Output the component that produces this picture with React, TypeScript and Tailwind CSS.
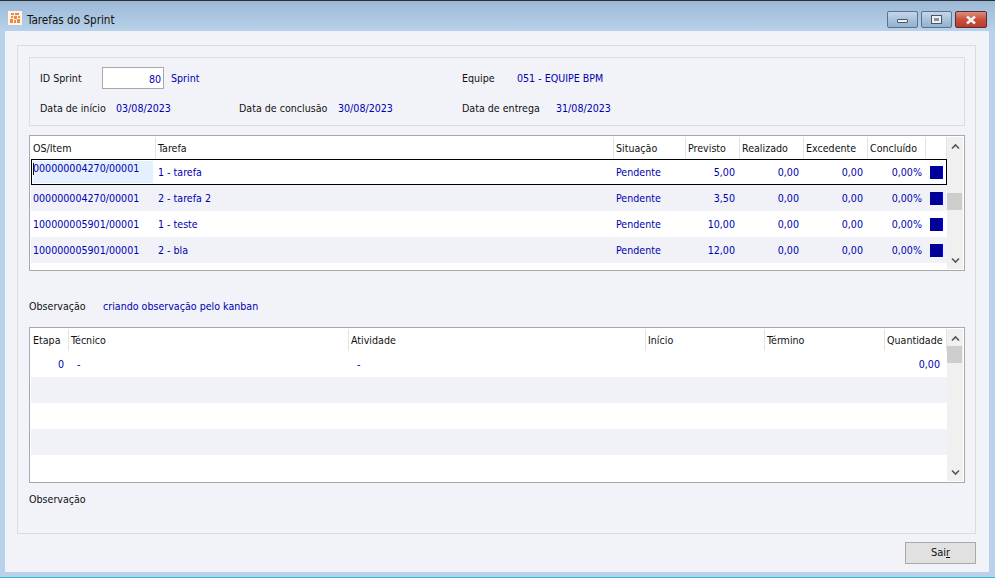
import React from "react";

const blue = "text-[#0000b0]";

const taskCols = [
  { title: "OS/Item", w: "w-[125px]" },
  { title: "Tarefa", w: "w-[458px]" },
  { title: "Situação", w: "w-[72px]" },
  { title: "Previsto", w: "w-[54px]" },
  { title: "Realizado", w: "w-[64px]" },
  { title: "Excedente", w: "w-[64px]" },
  { title: "Concluído", w: "w-[58px]" },
  { title: "", w: "w-[21px]" },
];

const tasks = [
  { os: "000000004270/00001", task: "1 - tarefa", prev: "5,00" },
  { os: "000000004270/00001", task: "2 - tarefa 2", prev: "3,50" },
  { os: "100000005901/00001", task: "1 - teste", prev: "10,00" },
  { os: "100000005901/00001", task: "2 - bla", prev: "12,00" },
];

const stepCols = [
  { title: "Etapa", w: "w-[38px]" },
  { title: "Técnico", w: "w-[280px]" },
  { title: "Atividade", w: "w-[297px]" },
  { title: "Início", w: "w-[119px]" },
  { title: "Término", w: "w-[120px]" },
  { title: "Quantidade", w: "w-[62px]" },
];

function HeaderRow({ cols }: { cols: { title: string; w: string }[] }) {
  return (
    <div className="flex h-[22px] shrink-0 bg-white">
      {cols.map((c) => (
        <div
          key={c.title || "blank"}
          className={`${c.w} h-[22px] border-r border-[#e3e3e3] pl-[2px] pt-[3px] leading-[16px] text-[#111] whitespace-nowrap`}
        >
          {c.title}
        </div>
      ))}
    </div>
  );
}

function Scrollbar({ thumb }: { thumb: string }) {
  return (
    <div className="flex w-[16px] shrink-0 flex-col bg-[#f0f0f0]">
      <div className="flex h-[18px] items-center justify-center">
        <svg width="9" height="7" viewBox="0 0 9 7">
          <path d="M1 5.5 L4.5 2 L8 5.5" fill="none" stroke="#555" strokeWidth="1.6" />
        </svg>
      </div>
      <div className={`${thumb} h-[17px] w-[15px] bg-[#cdcdcd]`} />
      <div className="flex-1" />
      <div className="flex h-[18px] items-center justify-center">
        <svg width="9" height="7" viewBox="0 0 9 7">
          <path d="M1 1.5 L4.5 5 L8 1.5" fill="none" stroke="#555" strokeWidth="1.6" />
        </svg>
      </div>
    </div>
  );
}

function TaskRow({ t, index }: { t: (typeof tasks)[number]; index: number }) {
  const selected = index === 0;
  return (
    <div
      className={`relative flex h-[26px] items-center ${blue} ${index % 2 === 1 ? "bg-[#f1f2f8]" : "bg-white"}`}
    >
      {selected && (
        <div className="absolute left-0 top-0 h-[26px] w-[916px] border border-black" />
      )}
      {selected && (
        <div className="absolute left-[2px] top-[2px] h-[22px] w-[120px] bg-[#e4f0fd]" />
      )}
      <div className={`relative w-[125px] pl-[2px] pt-[2px] whitespace-nowrap ${selected ? "-translate-y-[4px]" : ""}`}>
        {t.os}
      </div>
      {selected && <div className="absolute left-[2px] top-[4px] h-[12px] w-[1px] bg-[#111]" />}
      <div className="w-[458px] pl-[2px] pt-[2px]">{t.task}</div>
      <div className="w-[72px] pl-[2px] pt-[2px]">Pendente</div>
      <div className="w-[54px] pr-[5px] pt-[2px] text-right">{t.prev}</div>
      <div className="w-[64px] pr-[5px] pt-[2px] text-right">0,00</div>
      <div className="w-[64px] pr-[5px] pt-[2px] text-right">0,00</div>
      <div className="w-[58px] pr-[4px] pt-[2px] text-right">0,00%</div>
      <div className="w-[21px] pl-[4px]">
        <div className="h-[13px] w-[13px] border-r border-[#0000ff] bg-[#000099]" />
      </div>
    </div>
  );
}

function StepRow({ index }: { index: number }) {
  const first = index === 0;
  return (
    <div className={`flex h-[26px] items-center pt-[2px] ${blue} ${index % 2 === 1 ? "bg-[#f1f2f8]" : "bg-white"}`}>
      <div className="w-[33px] text-right">{first ? "0" : ""}</div>
      <div className="w-[285px] pl-[13px]">{first ? "-" : ""}</div>
      <div className="w-[297px] pl-[8px]">{first ? "-" : ""}</div>
      <div className="w-[119px]" />
      <div className="w-[120px]" />
      <div className="w-[55px] text-right">{first ? "0,00" : ""}</div>
    </div>
  );
}

function WindowButton({ children, close }: { children: React.ReactNode; close?: boolean }) {
  return (
    <div
      className={`flex h-[17px] items-center justify-center rounded-[2px] border ${
        close
          ? "w-[32px] border-[#5c2a3a] bg-gradient-to-b from-[#dc8c7c] via-[#c8503c] to-[#b83c2c]"
          : "w-[31px] border-[#5f7088] bg-gradient-to-b from-[#c5d8ea] via-[#a9c2da] to-[#93b2ce]"
      }`}
    >
      {children}
    </div>
  );
}

export default function App() {
  return (
    <div className="flex h-[578px] w-[995px] flex-col overflow-hidden border-t border-[#2b2f33] bg-[#b9d1ea] font-['DejaVu_Sans_Condensed','Noto_Sans',sans-serif] text-[10.6px] text-[#111]">
      <div className="flex h-[30px] shrink-0 items-center bg-gradient-to-b from-[#9bb9d6] to-[#b9d1ea] pl-[8px] pr-[8px]">
        <svg width="14" height="14" viewBox="0 0 14 14" className="mt-[4px] shrink-0">
          <rect width="14" height="14" fill="#fdf3ea" />
          <path d="M3 2 H6 V4 H3 Z M7 2 H11 V4 H7 Z M3 5 H5 V7 H3 Z M6 5 H9 V8 H6 Z M10 5 H12 V7 H10 Z M2 8 H5 V12 H2 Z M6 9 H8 V12 H6 Z M9 8 H12 V12 H9 Z" fill="#f28a3c" />
        </svg>
        <span className="ml-[5px] mt-[9px] text-[11.6px] text-[#111]">Tarefas do Sprint</span>
        <div className="ml-auto mt-[7px] flex gap-[3px]">
          <WindowButton>
            <div className="mt-[3px] h-[4px] w-[11px] rounded-[1px] border border-[#4a5568] bg-[#f0f0f0]" />
          </WindowButton>
          <WindowButton>
            <div className="flex h-[9px] w-[11px] items-center justify-center border border-[#4a5568] bg-[#f0f0f0]">
              <div className="h-[3px] w-[5px] bg-[#7f93a8]" />
            </div>
          </WindowButton>
          <WindowButton close>
            <svg width="12" height="10" viewBox="0 0 12 10">
              <path d="M2 1.5 L10 8.5 M10 1.5 L2 8.5" stroke="#f2f2f2" strokeWidth="2.6" />
            </svg>
          </WindowButton>
        </div>
      </div>

      <div className="flex flex-1 pb-[5px] pl-[5px]">
        <div className="flex h-[541px] w-[984px] flex-col bg-[#f2f3f9] pl-[12px] pr-[13px] pt-[14px]">
          <div className="flex h-[489px] w-[959px] shrink-0 flex-col border border-[#dcdcdc] px-[11px] pt-[11px]">
            <div className="flex h-[69px] w-[936px] shrink-0 flex-col border border-[#dcdcdc] pl-[10px]">
              <div className="mt-[9px] flex h-[22px] items-center">
                <span className="w-[62px] pt-[2px]">ID Sprint</span>
                <div className={`h-[22px] w-[62px] border border-[#a9a9a9] bg-white pr-[2px] text-right leading-[22px] ${blue}`}>
                  80
                </div>
                <span className={`ml-[7px] w-[291px] pt-[2px] ${blue}`}>Sprint</span>
                <span className="w-[55px] pt-[2px]">Equipe</span>
                <span className={`pt-[2px] ${blue}`}>051 - EQUIPE BPM</span>
              </div>
              <div className="mt-[12px] flex h-[16px] items-center">
                <span className="w-[76px]">Data de início</span>
                <span className={`w-[123px] ${blue}`}>03/08/2023</span>
                <span className="w-[99px]">Data de conclusão</span>
                <span className={`w-[124px] ${blue}`}>30/08/2023</span>
                <span className="w-[94px]">Data de entrega</span>
                <span className={blue}>31/08/2023</span>
              </div>
            </div>

            <div className="mt-[9px] flex h-[136px] w-[936px] shrink-0 border border-[#a9a9a9] bg-white p-[1px]">
              <div className="flex-1">
                <HeaderRow cols={taskCols} />
                {tasks.map((t, i) => (
                  <TaskRow key={t.os + t.task} t={t} index={i} />
                ))}
              </div>
              <Scrollbar thumb="mt-[38px]" />
            </div>

            <div className="mt-[27px] flex h-[16px] items-center pt-[2px]">
              <span className="w-[74px]">Observação</span>
              <span className={blue}>criando observação pelo kanban</span>
            </div>

            <div className="mt-[13px] flex h-[156px] w-[936px] shrink-0 border border-[#a9a9a9] bg-white p-[1px]">
              <div className="flex-1">
                <HeaderRow cols={stepCols} />
                {[0, 1, 2, 3, 4].map((i) => (
                  <StepRow key={i} index={i} />
                ))}
              </div>
              <Scrollbar thumb="-mt-[1px]" />
            </div>

            <div className="mt-[8px] h-[16px] leading-[16px]">Observação</div>
          </div>

          <div className="mt-[8px] flex justify-end">
            <button className="h-[22px] w-[71px] border border-[#a9a9a9] bg-[#e1e1e1] pt-[1px] text-[11px] text-[#111]">
              Sai<span className="underline">r</span>
            </button>
          </div>
        </div>
      </div>
      <div className="h-[1px] shrink-0 bg-[#2fbcdc]" />
    </div>
  );
}
